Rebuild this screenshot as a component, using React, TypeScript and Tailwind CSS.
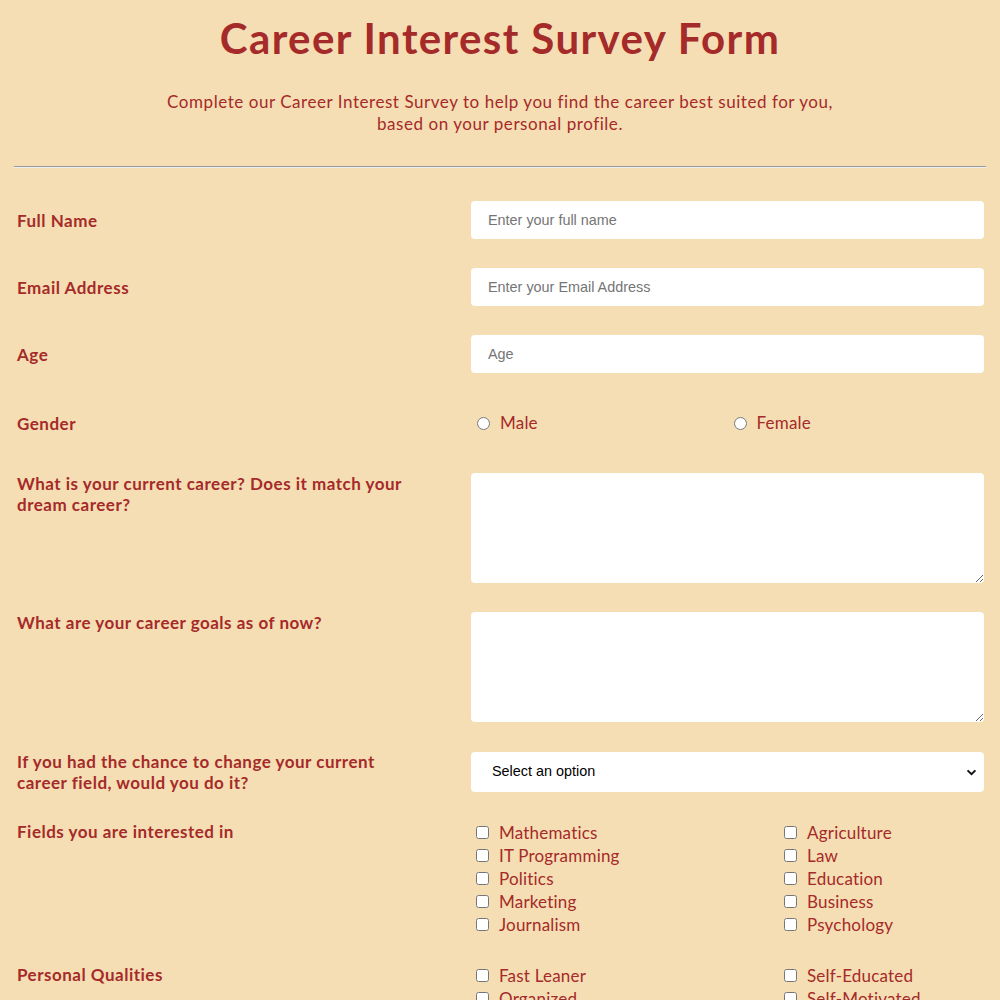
import React from "react";

const font = { fontFamily: "Lato, 'Noto Sans', sans-serif" };
const arial = { fontFamily: "'Liberation Sans', Arial, sans-serif" };

const fields = [
  ["Mathematics", "Agriculture"],
  ["IT Programming", "Law"],
  ["Politics", "Education"],
  ["Marketing", "Business"],
  ["Journalism", "Psychology"],
];

const qualities = [
  ["Fast Leaner", "Self-Educated"],
  ["Organized", "Self-Motivated"],
  ["Team Player", "Creative"],
];

function Label({ children }: { children: React.ReactNode }) {
  return (
    <div className="w-[457px] shrink-0 pl-[3px] pr-[50px] text-[17px] font-bold leading-[21px] tracking-[0.5px] text-[#a52a2a]">
      {children}
    </div>
  );
}

function CheckGrid({ rows, name }: { rows: string[][]; name: string }) {
  return (
    <div className="mr-[2px] grid flex-1 grid-cols-[308px_1fr]">
      {rows.map(([a, b]) => (
        <React.Fragment key={a}>
          {[a, b].map((item) => (
            <label
              key={item}
              className="flex h-[23px] items-center text-[17px] tracking-[0.2px] text-[#a52a2a]"
            >
              <input
                type="checkbox"
                name={name}
                className="ml-[5px] mr-[10px] h-[13px] w-[13px]"
              />
              {item}
            </label>
          ))}
        </React.Fragment>
      ))}
    </div>
  );
}

const inputCls =
  "block w-full rounded-[4px] bg-white px-[17px] text-[14.4px] text-black outline-none placeholder:text-[#757575]";

export default function App() {
  return (
    <div className="min-h-screen bg-[#f5deb3] px-[14px] pb-10" style={font}>
      <h1 className="pt-[14px] text-center text-[42px] font-bold leading-[48px] tracking-[1.4px] text-[#a52a2a]">
        Career Interest Survey Form
      </h1>
      <p className="mt-[29px] text-center text-[17px] leading-[22px] tracking-[0.55px] text-[#a52a2a]">
        Complete our Career Interest Survey to help you find the career best
        suited for you,
        <br />
        based on your personal profile.
      </p>
      <hr className="mt-[31px] border-t border-b border-t-[#9a9a9a] border-b-[#eeeeee]" />

      <form className="pt-[33px]">
        <div className="mb-[29px] flex items-center">
          <Label>Full Name</Label>
          <input
            type="text"
            placeholder="Enter your full name"
            className={inputCls + " mr-[2px] h-[38px]"}
            style={arial}
          />
        </div>

        <div className="mb-[29px] flex items-center">
          <Label>Email Address</Label>
          <input
            type="email"
            placeholder="Enter your Email Address"
            className={inputCls + " mr-[2px] h-[38px]"}
            style={arial}
          />
        </div>

        <div className="mb-[39px] flex items-center">
          <Label>Age</Label>
          <input
            type="number"
            placeholder="Age"
            className={inputCls + " mr-[2px] h-[38px]"}
            style={arial}
          />
        </div>

        <div className="mb-[39px] flex h-[22px] items-center">
          <Label>Gender</Label>
          <div className="grid flex-1 grid-cols-2">
            <label className="flex items-center text-[17px] tracking-[0.2px] text-[#a52a2a]">
              <input type="radio" name="gender" className="ml-[6px] mr-[10px] h-[13px] w-[13px]" />
              Male
            </label>
            <label className="flex items-center text-[17px] tracking-[0.2px] text-[#a52a2a]">
              <input type="radio" name="gender" className="ml-[5px] mr-[10px] h-[13px] w-[13px]" />
              Female
            </label>
          </div>
        </div>

        <div className="mb-[29px] flex items-start">
          <Label>What is your current career? Does it match your dream career?</Label>
          <textarea className={inputCls + " mr-[2px] h-[110px] py-2"} />
        </div>

        <div className="mb-[29px] flex items-start">
          <Label>What are your career goals as of now?</Label>
          <textarea className={inputCls + " mr-[2px] h-[110px] py-2"} />
        </div>

        <div className="mb-[28px] flex items-center">
          <Label>If you had the chance to change your current career field, would you do it?</Label>
          <div className="relative mr-[2px] flex-1">
            <select
              defaultValue=""
              className={inputCls + " h-[40px] appearance-none pl-[21px]"}
              style={arial}
            >
              <option value="" disabled>
                Select an option
              </option>
              <option>Yes</option>
              <option>No</option>
              <option>Not sure</option>
            </select>
            <svg
              viewBox="0 0 12 8"
              className="pointer-events-none absolute right-[7px] top-[17px] h-[7px] w-[11px]"
            >
              <path d="M1.5 1.5 6 6 10.5 1.5" fill="none" stroke="#111" strokeWidth="2.2" />
            </svg>
          </div>
        </div>

        <div className="mb-[28px] flex items-start">
          <Label>Fields you are interested in</Label>
          <CheckGrid rows={fields} name="fields" />
        </div>

        <div className="flex items-start">
          <Label>Personal Qualities</Label>
          <CheckGrid rows={qualities} name="qualities" />
        </div>
      </form>
    </div>
  );
}
